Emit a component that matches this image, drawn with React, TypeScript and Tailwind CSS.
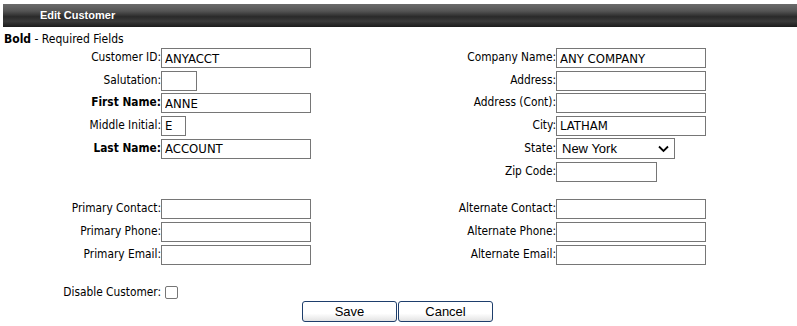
const label = "text-right text-[11.8px] text-black leading-none whitespace-nowrap";
const box = "h-[20px] border border-[#767676] bg-white px-[3px] text-[13px] text-black leading-none outline-none";

function Field({
  text,
  value = "",
  bold = false,
  w = "w-[150px]",
}: {
  text: string;
  value?: string;
  bold?: boolean;
  w?: string;
}) {
  return (
    <>
      <div className={`${label} ${bold ? "font-bold" : ""}`}>{text}</div>
      <div className="flex items-center">
        <input readOnly value={value} className={`${box} ${w}`} />
      </div>
    </>
  );
}

function Empty() {
  return (
    <>
      <div />
      <div />
    </>
  );
}

function StateSelect() {
  return (
    <div className="flex items-center">
      <div className="relative flex h-[21px] w-[119px] items-center border border-[#767676] bg-white pl-[5px] font-['Liberation_Sans',Arial,sans-serif] text-[13px] text-black">
        New York
        <svg
          className="absolute right-[5px] top-[6px]"
          width="11"
          height="8"
          viewBox="0 0 11 8"
          fill="none"
        >
          <path d="M1 1.5 L5.5 6 L10 1.5" stroke="#000" strokeWidth="1.8" />
        </svg>
      </div>
    </div>
  );
}

export default function App() {
  const cols = "grid grid-cols-[161px_234px_161px_1fr] items-center";
  return (
    <div className="h-[326px] w-[797px] overflow-hidden bg-white pt-[4px] font-['DejaVu_Sans_Condensed','DejaVu_Sans',sans-serif]">
      <div className="ml-[3px] flex h-[23px] items-center bg-[linear-gradient(#6b6b6b_0%,#555_30%,#3c3c3c_45%,#2a2a2a_55%,#3a3a3a_75%,#1c1c1c_100%)] pl-[37px] font-['Liberation_Sans',Arial,sans-serif] text-[11px] font-bold text-white">
        Edit Customer
      </div>

      <div className="mt-[5px] pl-[4px] text-[12px] leading-[14px] text-black">
        <span className="font-bold">Bold</span> - Required Fields
      </div>

      <div className={`${cols} mt-[2px] gap-y-[2.6px]`}>
        <Field text="Customer ID:" value="ANYACCT" />
        <Field text="Company Name:" value="ANY COMPANY" />

        <Field text="Salutation:" w="w-[36px]" />
        <Field text="Address:" />

        <Field text="First Name:" value="ANNE" bold />
        <Field text="Address (Cont):" />

        <Field text="Middle Initial:" value="E" w="w-[25px]" />
        <Field text="City:" value="LATHAM" />

        <Field text="Last Name:" value="ACCOUNT" bold />
        <div className={label}>State:</div>
        <StateSelect />
      </div>

      <div className={`${cols} mt-[3px]`}>
        <Empty />
        <Field text="Zip Code:" w="w-[101px]" />
      </div>

      <div className={`${cols} mt-[17px] gap-y-[3px]`}>
        <Field text="Primary Contact:" />
        <Field text="Alternate Contact:" />

        <Field text="Primary Phone:" />
        <Field text="Alternate Phone:" />

        <Field text="Primary Email:" />
        <Field text="Alternate Email:" />
      </div>

      <div className={`${cols} mt-[21px]`}>
        <div className={label}>Disable Customer:</div>
        <div className="flex items-center">
          <span className="ml-[4px] block h-[13px] w-[13px] rounded-[2px] border border-[#767676] bg-white" />
        </div>
      </div>

      <div className="mt-[2px] flex justify-center gap-[1px] pr-[2px] font-['Liberation_Sans',Arial,sans-serif] text-[13px] text-black">
        <button className="h-[21px] w-[95px] rounded-[3px] border border-[#1e3e6c] bg-[linear-gradient(#ffffff_0%,#ffffff_60%,#e3e3e3_100%)] leading-none">
          Save
        </button>
        <button className="h-[21px] w-[95px] rounded-[3px] border border-[#1e3e6c] bg-[linear-gradient(#ffffff_0%,#ffffff_60%,#e3e3e3_100%)] leading-none">
          Cancel
        </button>
      </div>
    </div>
  );
}
